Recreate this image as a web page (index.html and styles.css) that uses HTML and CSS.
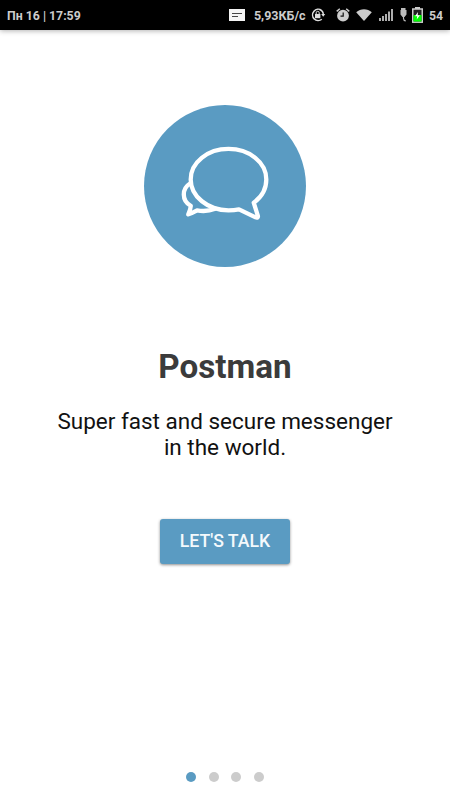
FILE: index.html
```html
<!DOCTYPE html>
<html lang="en">
<head>
    <meta charset="UTF-8">
    <meta name="viewport" content="width=device-width, initial-scale=1.0">
    <title>Postman</title>
    <link rel="stylesheet" href="styles.css">
</head>
<body>

<header class="status-bar">
    <span class="clock">Пн 16 | 17:59</span>
    <svg class="icon-message" width="16" height="12" viewBox="0 0 16 12">
        <rect width="16" height="12" fill="#f4f4f4"/>
        <path d="M3 4.5h10M3 7.5h6" stroke="#444" stroke-width="1.2"/>
    </svg>
    <span class="speed">5,93КБ/с</span>
    <svg class="icon-rotation" width="14" height="14" viewBox="0 0 14 14">
        <path d="M10.5 2.4A5.6 5.6 0 1 0 10.8 11.2M8.5 1.5A5.6 5.6 0 0 1 12.3 7" fill="none" stroke="#ddd" stroke-width="1.5"/>
        <path d="M10.2 6h4l-2 2.8z" fill="#ddd"/>
        <rect x="4" y="6" width="5.4" height="4.2" fill="#ddd"/>
        <path d="M5.2 6V4.8a1.5 1.5 0 0 1 3 0V6" fill="none" stroke="#ddd" stroke-width="1"/>
    </svg>
    <svg class="icon-alarm" width="14" height="14" viewBox="0 0 14 14">
        <circle cx="7" cy="7.7" r="5.9" fill="#ccc"/>
        <path d="M.7 3.4L3.8.8M10.2.8l3.1 2.6" stroke="#ccc" stroke-width="1.5"/>
        <path d="M7.2 4.5v3.7H4.5" fill="none" stroke="#111" stroke-width="1.2"/>
    </svg>
    <svg class="icon-wifi" width="16" height="12" viewBox="0 0 16 12">
        <path d="M8 12L.2 3.2C4.5-.8 11.5-.8 15.8 3.2z" fill="#ccc"/>
    </svg>
    <svg class="icon-signal" width="14" height="12" viewBox="0 0 14 12">
        <path d="M1 9v3M4 7v5M7 5v7M10 2.5V12M13 0v12" stroke="#ccc" stroke-width="1.7"/>
    </svg>
    <svg class="icon-plug" width="7" height="14" viewBox="0 0 7 14">
        <path d="M1 0h4.5v2H6.5v4.5L4.5 9h-2L.5 6.5V2H1z" fill="#bbb"/>
        <path d="M3.5 8v2.5q0 2 2.3 2.5" fill="none" stroke="#bbb" stroke-width="1.2"/>
    </svg>
    <svg class="icon-battery" width="11" height="16" viewBox="0 0 11 16">
        <path d="M3 0h5v2H3z" fill="#ccc"/>
        <rect x=".75" y="2" width="9.5" height="13.2" fill="#222" stroke="#ccc" stroke-width="1.5"/>
        <path d="M1.5 8h8v6.5h-8z" fill="#0f0"/>
        <path d="M6 5L3 9.3h2.2L4.7 12.5 8 8.2H5.7z" fill="#fff"/>
    </svg>
    <span class="level">54</span>
</header>

<main class="intro">
    <div class="logo">
        <svg width="162" height="162" viewBox="0 0 162 162">
            <g transform="translate(31 35)" fill="none" stroke="#fff" stroke-width="4.3" stroke-linejoin="round" stroke-linecap="round">
                <path d="M15 43.5C11 46 8.8 50 8.8 54.5C8.8 59.5 11.5 63.5 15.8 65.8C15.6 69 14.3 71.8 13.2 74.4C16 74 19 72 22 70.4C28 71.5 34.5 71 40.2 68.8"/>
                <path d="M53.5 8.9C32.5 8.9 15.7 22.5 15.7 39.4C15.7 56.5 33 70.3 53.5 70.3C57.2 70.3 60.7 70 64 69.4L80.6 77.4C82.2 78.1 83.3 77.3 82.8 75.7L78.7 62.7C86.5 57 91.3 48.8 91.3 39.4C91.3 22.5 74.5 8.9 53.5 8.9Z"/>
            </g>
        </svg>
    </div>
    <h1>Postman</h1>
    <p>Super fast and secure messenger<br>in the world.</p>
    <button class="talk-button" type="button">LET'S TALK</button>
</main>

<footer class="dots">
    <span class="dot active"></span>
    <span class="dot"></span>
    <span class="dot"></span>
    <span class="dot"></span>
</footer>

</body>
</html>
```
FILE: styles.css
```css
* {
    box-sizing: border-box;
}
body {
    font-family: Roboto, sans-serif;
    margin: 0;
    height: 800px;
    background: white;
    display: flex;
    flex-direction: column;
    overflow: hidden;
}
.status-bar {
    display: flex;
    align-items: center;
    height: 30px;
    flex: none;
    padding: 0 7px;
    background: #000;
    color: #ccc;
    font-size: 12.3px;
    font-weight: bold;
    line-height: 30px;
    white-space: nowrap;
    box-shadow: 0 1px 5px rgba(0, 0, 0, 0.3);
}
.status-bar svg {
    flex: none;
}
.clock {
    width: 222px;
    padding-top: 2px;
}
.speed {
    width: 58px;
    margin-left: 9px;
    padding-top: 2px;
    font-size: 12.5px;
}
.icon-rotation {
    overflow: visible;
    margin-left: -1px;
}
.icon-alarm {
    margin-left: 11px;
}
.icon-wifi {
    margin-left: 6px;
}
.icon-signal {
    margin-left: 7px;
}
.icon-plug {
    margin-left: 7px;
}
.icon-battery {
    margin-left: 5px;
}
.level {
    margin-left: 6px;
    padding-top: 1px;
}
.intro {
    flex: 1;
    display: flex;
    flex-direction: column;
    align-items: center;
    padding-top: 75px;
    text-align: center;
}
.logo {
    width: 162px;
    height: 162px;
    border-radius: 50%;
    background: #5a9bc2;
}
.logo svg {
    display: block;
}
h1 {
    margin: 80px 0 0;
    color: #3b3b3b;
    font-size: 33.2px;
    line-height: 40px;
}
p {
    margin: 21px 0 0;
    color: #111;
    font-size: 22.5px;
    line-height: 26px;
}
.talk-button {
    width: 130px;
    height: 45px;
    margin-top: 59px;
    padding: 0 0 2px;
    border: none;
    border-radius: 3px;
    background: #5a9bc2;
    color: #f4f9fc;
    font-family: inherit;
    font-size: 17.7px;
    font-weight: 500;
    box-shadow: 0 1px 3px rgba(0, 0, 0, 0.45);
}
.dots {
    display: flex;
    justify-content: center;
    gap: 12.5px;
    padding-bottom: 18px;
}
.dot {
    width: 10px;
    height: 10px;
    border-radius: 50%;
    background: #ccc;
}
.dot.active {
    background: #5a9bc2;
}
```
